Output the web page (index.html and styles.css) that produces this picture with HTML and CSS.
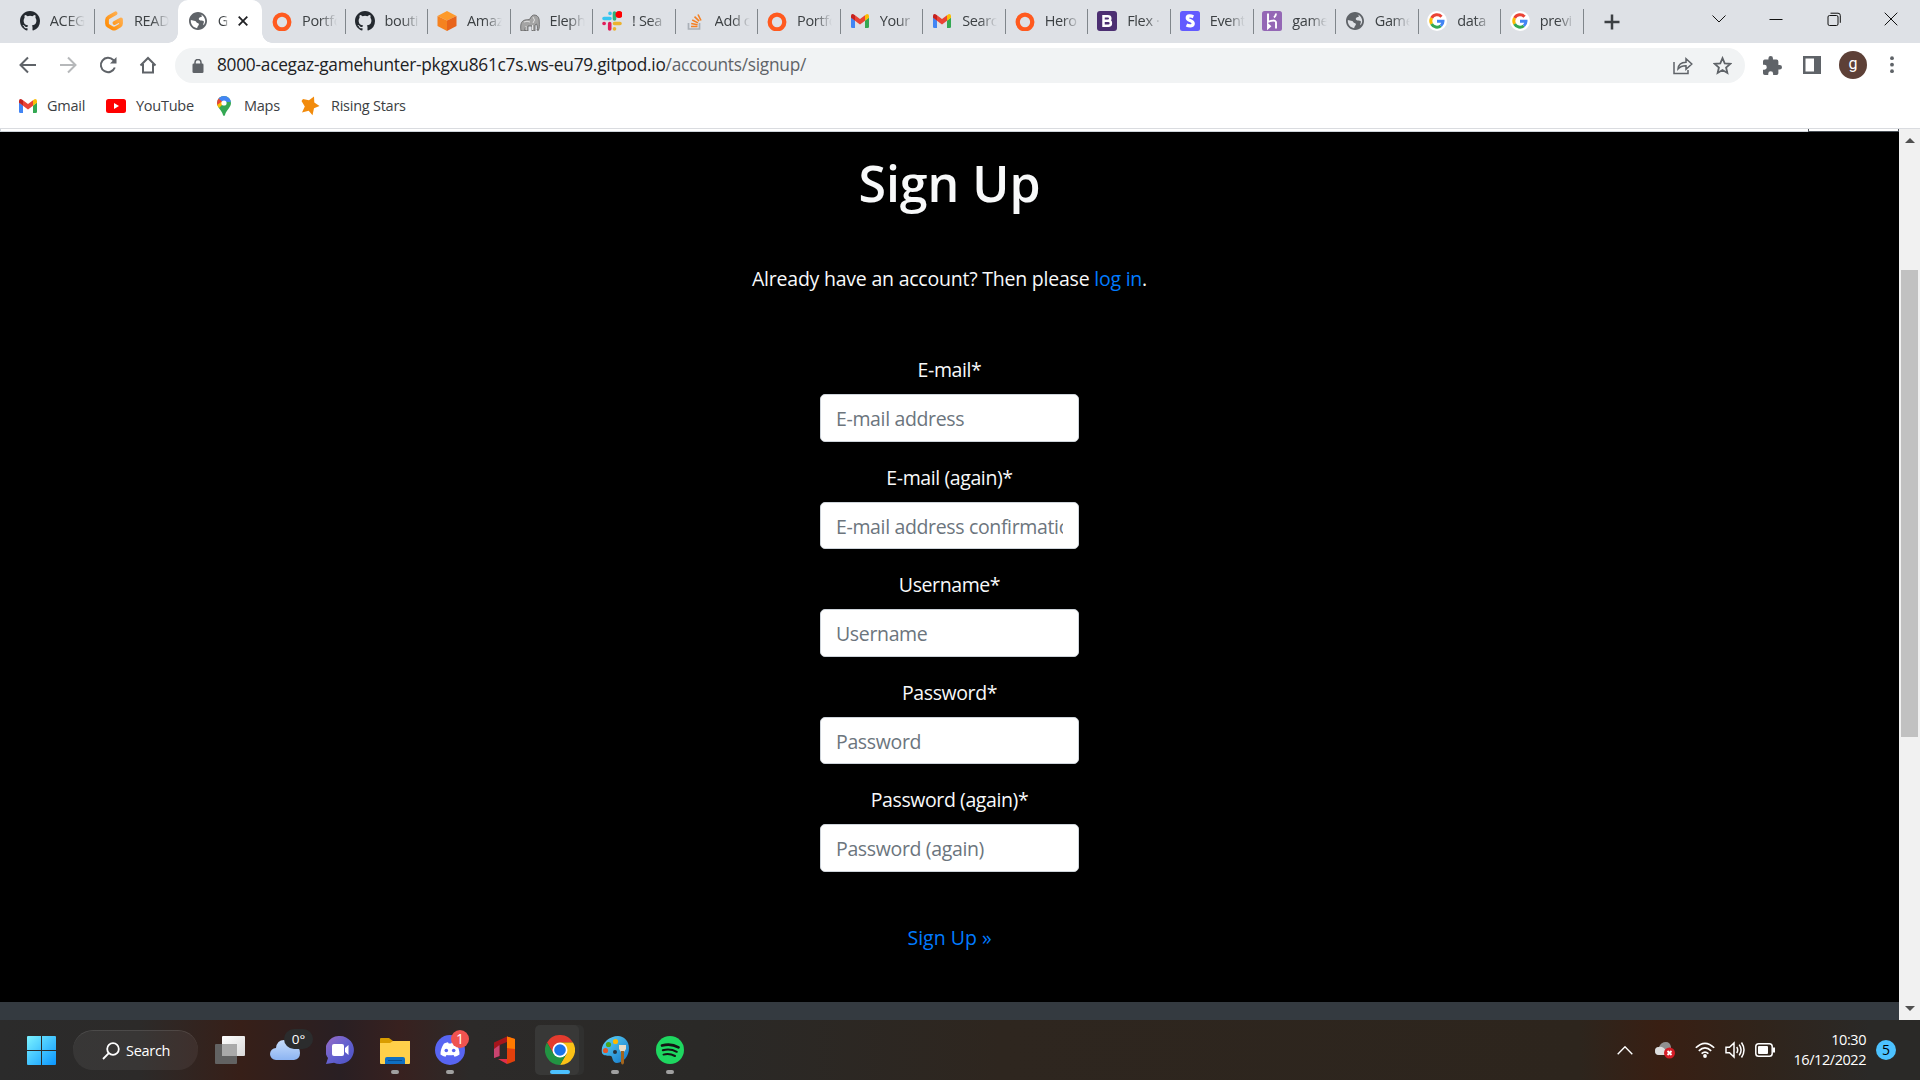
FILE: index.html
```
<!DOCTYPE html>
<html lang="en">
<head>
<meta charset="utf-8">
<title>Sign Up</title>
<link rel="stylesheet" href="styles.css">
</head>
<body>
<svg class="defs" width="0" height="0">
  <defs>
    <symbol id="github" viewBox="0 0 16 16"><path fill="#24292f" d="M8 0C3.58 0 0 3.58 0 8c0 3.54 2.29 6.53 5.47 7.59.4.07.55-.17.55-.38 0-.19-.01-.82-.01-1.49-2.01.37-2.53-.49-2.69-.94-.09-.23-.48-.94-.82-1.13-.28-.15-.68-.52-.01-.53.63-.01 1.08.58 1.23.82.72 1.21 1.87.87 2.33.66.07-.52.28-.87.51-1.07-1.78-.2-3.64-.89-3.64-3.95 0-.87.31-1.59.82-2.15-.08-.2-.36-1.02.08-2.12 0 0 .67-.21 2.2.82a7.4 7.4 0 0 1 4 0c1.53-1.04 2.2-.82 2.2-.82.44 1.1.16 1.92.08 2.12.51.56.82 1.27.82 2.15 0 3.07-1.87 3.75-3.65 3.95.29.25.54.73.54 1.48 0 1.07-.01 1.93-.01 2.2 0 .21.15.46.55.38A8.01 8.01 0 0 0 16 8c0-4.42-3.58-8-8-8z"/></symbol>
    <symbol id="gitpod" viewBox="0 0 20 20"><defs><linearGradient id="gp" x1="1" y1="0" x2="0" y2="1"><stop stop-color="#ffb45b"/><stop offset="1" stop-color="#ff8a00"/></linearGradient></defs><path fill="none" stroke="url(#gp)" stroke-width="3.8" stroke-linejoin="round" stroke-linecap="round" d="M11.5 2.300 4.800 6.200Q3 7.200 3 9V12.500Q3 14.100 4.400 14.900L8.600 17.300Q10 18 11.400 17.300L15.600 14.900Q17 14.100 17 12.500V8.500L10.500 12"/></symbol>
    <symbol id="globe" viewBox="2 2 20 20"><path fill="#5f6368" d="M12 2C6.480 2 2 6.480 2 12s4.480 10 10 10 10-4.480 10-10S17.520 2 12 2zm-1 17.930c-3.950-.490-7-3.850-7-7.930 0-.380.030-.750.080-1.100L8.800 12.100c1.100.3 1.200 1.400 2 1.800.9.500 2 .3 2.200 1.600.1 1.300-1.500 1.500-2 4.430zM18 16.800c-.8-1.600 1.500-3.400.2-4.700-1.200-1.200-3.200-.3-4.700-1.300-1.200-.8-.6-2.600.8-2.900 1.300-.3 2.500-.2 2-1.600-.2-.6-1-.9-1.300-1.600C18 5.900 20 8.700 20 12c0 1.800-.8 3.500-2 4.800z"/></symbol>
    <symbol id="ring" viewBox="0 0 20 20"><circle cx="10" cy="11" r="7.300" fill="none" stroke="#ff5a1f" stroke-width="4.300"/></symbol>
    <symbol id="cube" viewBox="0 0 20 20"><path fill="#fd9a2b" d="m10 0 9.500 5L10 9.500.5 5z"/><path fill="#f58220" d="m.5 5 9.500 4.500V20L.5 15z"/><path fill="#e8641b" d="M19.500 5 10 9.500V20l9.500-5z"/></symbol>
    <symbol id="elephant" viewBox="0 -3 20 20"><path fill="#a4a4a4" stroke="#555" stroke-width=".7" d="M1 17c-1-6 0-10 4-11 2-.6 4 0 5-1 1-3 3-4.400 5-4 3 .5 4.500 3 4.300 7 0 3 .5 6-1 8.500l-1.300-.5c1-2 .3-4-.5-6l-1.500 1v6h-3v-5H8v5H5.500v-4l-1 4z"/><path fill="none" stroke="#e2e2e2" d="M4 8q3-1.500 6 0M13 3q3 3 0 6M6 12v4M12.500 11v5"/></symbol>
    <symbol id="slack" viewBox="0 0 20 20"><g stroke-width="3.600" stroke-linecap="round"><path stroke="#36c5f0" d="M2 7.500h6M8 2.200v.2"/><path stroke="#2eb67d" d="M12.500 2v6"/><path stroke="#ecb22e" d="M12.500 12.500H18M12.500 17.700v.2"/><path stroke="#e01e5a" d="M7.700 12.500V18M2 12.500h.2"/></g><circle cx="17" cy="3.500" r="3.500" fill="#f00"/></symbol>
    <symbol id="stack" viewBox="0 0 20 20"><path fill="none" stroke="#aab0b7" stroke-width="1.700" d="M3.500 12v6h11v-6"/><path fill="none" stroke="#f48024" stroke-width="1.600" d="M6 15.500h6.500M6.200 12.500l6.400 1.300M7.200 9l5.800 2.900M9.500 5.700l4.700 4.500M13 3.500l3 6"/></symbol>
    <symbol id="gmail" viewBox="0 0 18 14"><path fill="#4285f4" d="M0 3.500 4 6.600V14H1.300Q0 14 0 12.700z"/><path fill="#34a853" d="M14 6.600 18 3.500v9.200q0 1.300-1.300 1.300H14z"/><path fill="#fbbc04" d="M14 1.300v5.500l4-3V2q0-2-2-2z"/><path fill="#c5221f" d="M0 2v1.800l4 3V1.300L2.500.2Q0-.5 0 2z"/><path fill="#ea4335" d="M4 1.300v5.500l5 3.700 5-3.700V1.300L9 5z"/></symbol>
    <symbol id="bootstrap" viewBox="0 0 20 20"><rect width="20" height="20" rx="3" fill="#4c2f72"/><path fill="none" stroke="#fff" stroke-width="2.500" d="M6.500 5.300h4.300q2.500 0 2.500 2.200T10.800 9.800H6.500h4.800q2.600 0 2.600 2.500t-2.600 2.500H6.500z"/></symbol>
    <symbol id="stripe" viewBox="0 0 20 20"><rect width="20" height="20" rx="2.500" fill="#635bff"/><path fill="none" stroke="#fff" stroke-width="3.300" d="M13.400 5.700C11 4.800 7.300 4.300 7.300 6.900c0 3 5.900 2.300 5.900 5.600 0 3-4.300 2.600-6.700 1.500"/></symbol>
    <symbol id="heroku" viewBox="0 0 20 20"><rect width="20" height="20" rx="2.500" fill="#9467b5"/><path fill="none" stroke="#fff" stroke-width="1.900" d="M6 2.500v8.300c3-1.300 8-2.200 8 .7v6M14 2.500q0 2.300-2 4M6 13.500v3.600l2-1.800z"/></symbol>
    <symbol id="google" viewBox="0 0 20 20"><circle cx="10" cy="10" r="10" fill="#fff"/><g fill="none" stroke-width="3"><path stroke="#ea4335" d="M14.500 5.700A6.100 6.100 0 0 0 4.600 7"/><path stroke="#fbbc05" d="M4.600 7a6.100 6.100 0 0 0 0 6"/><path stroke="#34a853" d="M4.600 13a6.100 6.100 0 0 0 9.200 1.800"/><path stroke="#4285f4" d="M13.800 14.800Q16 13 16 10.200H10"/></g></symbol>
  </defs>
</svg>

<header class="browser">
  <div class="tabstrip">
    <div class="tab first"><svg class="fav"><use href="#github"/></svg><span class="tab-title">ACEG</span></div>
    <div class="tab no-sep"><svg class="fav"><use href="#gitpod"/></svg><span class="tab-title">READ</span></div>
    <div class="tab active"><svg class="fav small"><use href="#globe"/></svg><span class="tab-title short">G</span><svg class="close" viewBox="0 0 10 10"><path d="m.7.700 8.600 8.600M9.300.7.700 9.300"/></svg></div>
    <div class="tab"><svg class="fav"><use href="#ring"/></svg><span class="tab-title">Portfo</span></div>
    <div class="tab"><svg class="fav"><use href="#github"/></svg><span class="tab-title">bouti</span></div>
    <div class="tab"><svg class="fav"><use href="#cube"/></svg><span class="tab-title">Amaz</span></div>
    <div class="tab"><svg class="fav"><use href="#elephant"/></svg><span class="tab-title">Eleph</span></div>
    <div class="tab"><svg class="fav"><use href="#slack"/></svg><span class="tab-title">! Sea</span></div>
    <div class="tab"><svg class="fav"><use href="#stack"/></svg><span class="tab-title">Add c</span></div>
    <div class="tab"><svg class="fav"><use href="#ring"/></svg><span class="tab-title">Portfo</span></div>
    <div class="tab"><svg class="fav small"><use href="#gmail"/></svg><span class="tab-title">Your</span></div>
    <div class="tab"><svg class="fav small"><use href="#gmail"/></svg><span class="tab-title">Searc</span></div>
    <div class="tab"><svg class="fav"><use href="#ring"/></svg><span class="tab-title">Hero</span></div>
    <div class="tab"><svg class="fav"><use href="#bootstrap"/></svg><span class="tab-title">Flex ·</span></div>
    <div class="tab"><svg class="fav"><use href="#stripe"/></svg><span class="tab-title">Event</span></div>
    <div class="tab"><svg class="fav"><use href="#heroku"/></svg><span class="tab-title">game</span></div>
    <div class="tab"><svg class="fav small"><use href="#globe"/></svg><span class="tab-title">Game</span></div>
    <div class="tab"><svg class="fav"><use href="#google"/></svg><span class="tab-title">data</span></div>
    <div class="tab"><svg class="fav"><use href="#google"/></svg><span class="tab-title">previ</span></div>
    <svg class="newtab" viewBox="0 0 16 16"><path d="M8 .5v15M.5 8h15"/></svg>
    <div class="winctl">
      <svg viewBox="0 0 14 14"><path d="m.5 3.500 6.500 6.500 6.500-6.500"/></svg>
      <svg viewBox="0 0 14 14"><path d="M.5 7.500h13"/></svg>
      <svg viewBox="0 0 14 14"><rect x="1" y="3.500" width="10" height="10" rx="1.500"/><path d="M3.500 1.200h7.500q2.300 0 2.300 2.300v7.300"/></svg>
      <svg viewBox="0 0 14 14"><path d="m.7.700 12.600 12.600M13.300.7.700 13.300"/></svg>
    </div>
  </div>
  <div class="toolbar">
    <div class="nav">
      <svg viewBox="0 0 18 18"><path d="M17 9H2M9 1.500 1.500 9 9 16.500"/></svg>
      <svg class="off" viewBox="0 0 18 18"><path d="M1 9h15M9 1.500 16.500 9 9 16.500"/></svg>
      <svg viewBox="0 0 18 18"><path d="M15.800 11.500A7.200 7.200 0 1 1 14.300 4l1.200 1.500"/><path class="solid" d="M17.500 1v6.500H11z"/></svg>
      <svg viewBox="0 0 18 18"><path d="M1.500 9.500 9 2l7.500 7.500M4 8v8.500h10V8"/></svg>
    </div>
    <div class="omnibox">
      <svg class="lock" viewBox="0 0 12 14"><rect x=".5" y="4.500" width="11" height="9.500" rx="1.300"/><path d="M3 5V3.500a3 3 0 0 1 6 0V5"/></svg>
      <span class="url">8000-acegaz-gamehunter-pkgxu861c7s.ws-eu79.gitpod.io<span class="path">/accounts/signup/</span></span>
      <svg class="share" viewBox="0 0 20 18"><path d="M1 5v11.500h14V13M5 12q.5-6.500 8-6.700V1.700L18.800 7 13 12.200V8.800Q8 8.700 5 12z"/></svg>
      <svg class="star" viewBox="0 0 18 18"><path d="m9 2 2.100 4.900 5.300.5-4 3.500 1.200 5.200L9 13.300l-4.600 2.800 1.200-5.200-4-3.500 5.300-.5z"/></svg>
    </div>
    <svg class="puzzle" viewBox="2 1 21 21"><path d="M20.500 11H19V7a2 2 0 0 0-2-2h-4V3.500a2.500 2.500 0 0 0-5 0V5H4a2 2 0 0 0-2 2v3.800h1.500a2.700 2.700 0 0 1 0 5.400H2V20a2 2 0 0 0 2 2h3.800v-1.500a2.700 2.700 0 0 1 5.400 0V22H17a2 2 0 0 0 2-2v-4h1.500a2.500 2.500 0 0 0 0-5z"/></svg>
    <svg class="panel" viewBox="0 0 18 18"><path fill-rule="evenodd" d="M0 0h18v18H0zM2.500 2.500v13H11v-13z"/></svg>
    <div class="avatar">g</div>
    <svg class="menu" viewBox="0 0 4 18"><circle cx="2" cy="2.200" r="1.900"/><circle cx="2" cy="8.700" r="1.900"/><circle cx="2" cy="15.200" r="1.900"/></svg>
  </div>
  <nav class="bookmarks">
    <a class="bm bm-gmail"><svg width="18" height="14"><use href="#gmail"/></svg>Gmail</a>
    <a class="bm bm-yt"><svg width="20" height="14" viewBox="0 0 20 14"><rect width="20" height="14" rx="2.500" fill="red"/><path fill="#fff" d="M8 4v6l5-3z"/></svg>YouTube</a>
    <a class="bm bm-maps"><svg width="14" height="20" viewBox="0 0 14 20"><defs><clipPath id="pin"><path d="M7 0a7 7 0 0 1 7 7c0 4.500-4.500 6.500-6 12q-1 2-2 0C4.500 13.500 0 11.500 0 7a7 7 0 0 1 7-7z"/></clipPath></defs><g clip-path="url(#pin)"><path fill="#34a853" d="M0 0h14v20H0z"/><path fill="#fbbc04" d="M0 14 12 2l-4-1L-2 9z"/><path fill="#ea4335" d="M0 9 7 4 2 0-2 4z"/><path fill="#4285f4" d="m1.500 2.500 4 3.300L14 6V0H1z"/></g><circle cx="7" cy="7" r="2.600" fill="#fff"/></svg>Maps</a>
    <a class="bm bm-stars"><svg width="19" height="20" viewBox="0 0 19 20"><path fill="#f28b0c" d="m2 3 6 1.200L13 .5l.3 6L18.500 10l-5.500 2.300-1.500 7-3.800-4.500L1 16.500l2.800-6L.5 5z"/></svg>Rising Stars</a>
  </nav>
</header>

<main class="viewport">
  <div class="page">
    <div class="navbar-end"><div class="navbar-box"></div></div>
    <section class="signup">
      <h1>Sign Up</h1>
      <p class="lead">Already have an account? Then please <a>log in</a>.</p>
      <form class="form">
        <div class="group"><label>E-mail*</label><input type="text" placeholder="E-mail address"></div>
        <div class="group"><label>E-mail (again)*</label><input type="text" placeholder="E-mail address confirmation"></div>
        <div class="group"><label>Username*</label><input type="text" placeholder="Username"></div>
        <div class="group"><label>Password*</label><input type="password" placeholder="Password"></div>
        <div class="group"><label>Password (again)*</label><input type="password" placeholder="Password (again)"></div>
        <a class="submit">Sign Up »</a>
      </form>
    </section>
    <footer class="footer"></footer>
  </div>
  <div class="scrollbar"><i class="up"></i><div class="thumb"></div><i class="down"></i></div>
</main>

<footer class="taskbar">
  <div class="apps">
    <div class="app start"><svg width="29" height="29" viewBox="0 0 29 29"><defs><linearGradient id="win" x1="0" y1="0" x2="29" y2="29" gradientUnits="userSpaceOnUse"><stop stop-color="#7cf3ff"/><stop offset="1" stop-color="#0a96ff"/></linearGradient></defs><path fill="url(#win)" d="M0 1q0-1 1-1h13v14H0zM15 0h13q1 0 1 1v13H15zM0 15h14v14H1q-1 0-1-1zM15 15h14v13q0 1-1 1H15z"/></svg></div>
    <div class="search"><svg width="18" height="18" viewBox="0 0 18 18"><circle cx="11" cy="7" r="5.800"/><path d="M6.800 11.200 1 17"/></svg>Search</div>
    <div class="app taskview"><svg width="30" height="28" viewBox="0 0 30 28"><defs><linearGradient id="tv" x1="0" y1="0" x2="1" y2="1"><stop stop-color="#fff"/><stop offset="1" stop-color="#d8d8d8"/></linearGradient></defs><rect y="8" width="22" height="20" rx="1" fill="#626262"/><rect x="7" width="23" height="20" rx="1" fill="url(#tv)"/><path fill="#a9a9a9" d="M7 8h15v12H7z"/></svg></div>
    <div class="app weather"><svg width="30" height="20" viewBox="0 0 30 20"><defs><linearGradient id="cl" x1="0" y1="0" x2="0" y2="1"><stop stop-color="#c7ddfb"/><stop offset="1" stop-color="#8cb4f2"/></linearGradient></defs><path fill="url(#cl)" d="M6 20a6 6 0 0 1 0-12Q7 0 14 0q6 0 8 6 8-1 8 7 0 6-6 7z"/></svg><span class="temp">0°</span></div>
    <div class="app chat"><svg width="28" height="28" viewBox="0 0 28 28"><defs><linearGradient id="ch" x1="0" y1="0" x2="1" y2="1"><stop stop-color="#9a6bc4"/><stop offset=".5" stop-color="#6461cf"/><stop offset="1" stop-color="#4a51c4"/></linearGradient></defs><path fill="url(#ch)" d="M14 0a14 14 0 1 1-6 26.700L0 28l2-6A14 14 0 0 1 14 0z"/><rect x="6" y="8" width="12" height="12" rx="2" fill="#fff"/><path fill="#fff" d="m19 12 3.500-3v10L19 16z"/></svg></div>
    <div class="app run"><svg width="30" height="27" viewBox="0 0 30 27"><path fill="#d99c00" d="M0 2q0-1 1-1h8l4 3v4H0z"/><path fill="#ffd04a" d="M0 6h10l3-2h17v22q0 1-1 1H1q-1 0-1-1z"/><path fill="#0f6fc2" d="M5 27v-5q0-2 2-2h16q2 0 2 2v5z"/><path stroke="#084c8d" d="M8 23.500h14"/></svg></div>
    <div class="app run"><svg width="30" height="30" viewBox="0 0 30 30"><circle cx="15" cy="15" r="15" fill="#5865f2"/><path fill="#fff" d="M9 8.500q2-1 4-1.200l.7 1.200h2.600l.7-1.200q2 .2 4 1.200 3.500 5 3.500 11-2.500 1.800-5 2.200l-1-1.800q-3.500.8-7 0l-1 1.800q-2.500-.4-5-2.200 0-6 3.500-11z"/><circle cx="11.300" cy="15.500" r="1.800" fill="#5865f2"/><circle cx="18.700" cy="15.500" r="1.800" fill="#5865f2"/></svg><span class="badge">1</span></div>
    <div class="app"><svg width="24" height="28" viewBox="0 0 24 28"><path fill="#a5151b" d="m1 6.500 13-6V6L6.500 9v11L1 22z"/><path fill="#c94470" d="M1 13v9l5.500-2V9z"/><path fill="#e2400c" d="m14 .5 8 2.500v22l-8 3z"/><path fill="#ff7a00" d="m14 .5 8 2.500v10l-8-1z"/><path fill="#e02f4a" d="M5 23h9v5z"/></svg></div>
    <div class="app chrome"><svg width="30" height="30" viewBox="0 0 30 30"><path fill="#e33b2e" d="M2 7.500a15 15 0 0 1 26 0H15L8.500 18.700z"/><path fill="#fbc116" d="M28 7.500A15 15 0 0 1 15 30l6.500-11.200L15 7.500z"/><path fill="#229342" d="M15 30A15 15 0 0 1 2 7.500l6.500 11.200h13z"/><circle cx="15" cy="15" r="7.500" fill="#fff"/><circle cx="15" cy="15" r="5.800" fill="#1a73e8"/></svg></div>
    <div class="app run"><svg width="28" height="30" viewBox="0 0 28 30"><defs><linearGradient id="pa" x1="0" y1="0" x2="1" y2="1"><stop stop-color="#5fd6f7"/><stop offset="1" stop-color="#1275c9"/></linearGradient></defs><path fill="url(#pa)" d="M17 1c6 0 11 5 11 12 0 8-5 14-12 15-5 0-4-6-6-7s-7 1-9-3C-1 9 8 1 17 1z"/><circle cx="14" cy="17" r="2" fill="#26323a"/><circle cx="4.500" cy="15.500" r="2.600" fill="#e2572b"/><circle cx="7.500" cy="9.500" r="2.600" fill="#4aa51c"/><circle cx="14.500" cy="6.500" r="2.600" fill="#ffb900"/><path fill="#e8ddc8" d="M18 10h7v4l-2 3h-3l-2-3z"/><path fill="#a3651d" d="M20 16h3v12q-1.500 3-3 0z"/></svg></div>
    <div class="app run"><svg width="28" height="28" viewBox="0 0 28 28"><circle cx="14" cy="14" r="14" fill="#1ed760"/><path fill="none" stroke="#141414" stroke-linecap="round" d="M6 9.500q9-2.500 16.500 1.800" stroke-width="2.700"/><path fill="none" stroke="#141414" stroke-linecap="round" d="M6.800 14.200q7.500-2 14 1.600M7.500 18.600q6-1.500 11.500 1.400" stroke-width="2"/></svg></div>
  </div>
  <div class="tray">
    <svg class="chevron" width="16" height="9" viewBox="0 0 16 9"><path d="m.7 8.300 7.300-7.500 7.300 7.500"/></svg>
    <svg class="cloud" width="20" height="17" viewBox="0 0 20 17"><path fill="#8f8f8f" stroke="none" d="M4 13a4 4 0 0 1 0-8q2-5 7-5 4 0 5 5v8z"/><path fill="#ddd" stroke="none" d="M4 13a4 4 0 0 1 0-8q4-1 7 4v4z"/><circle cx="14.500" cy="11" r="5.500" fill="#d41c26" stroke="none"/><path stroke-width="1.800" d="m12.500 9 4 4m0-4-4 4"/></svg>
    <svg width="20" height="16" viewBox="0 0 20 16"><path stroke-width="1.600" d="M.8 5.800q9.200-9 18.400 0M3.800 8.900q6.200-6 12.400 0M6.600 11.700q3.400-3.200 6.800 0"/><circle cx="10" cy="14" r="1.900" fill="#fff" stroke="none"/></svg>
    <svg width="20" height="18" viewBox="0 0 20 18"><path stroke-width="1.500" d="M1 6.200h3.500L9 2v14l-4.500-4.200H1zM11.700 6q2 3 0 6M14.200 3.600q3.800 5.400 0 10.800M16.500 1.500q5 7.500 0 15"/></svg>
    <svg width="20" height="14" viewBox="0 0 20 14"><rect x=".8" y=".8" width="16.400" height="12.400" rx="2.800" stroke-width="1.500"/><rect x="3" y="3" width="10" height="8" rx="1" fill="#fff" stroke="none"/><path stroke-width="2" d="M19 4.500v5"/></svg>
    <div class="clock"><span>10:30</span><span>16/12/2022</span></div>
    <div class="count">5</div>
  </div>
</footer>
</body>
</html>
```
FILE: styles.css
```
* { box-sizing: border-box; }
body { margin: 0; width: 1920px; height: 1080px; overflow: hidden; display: flex; flex-direction: column; font-family: "Open Sans", "Noto Sans", sans-serif; background: #fff; }
svg { display: block; flex: none; }
.defs { position: absolute; }

/* Browser chrome */
.browser { height: 129px; flex: none; background: #fff; border-bottom: 1px solid #dadce0; }
.tabstrip { height: 43px; background: #dee1e6; display: flex; align-items: center; padding-left: 12.800px; }
.tab { width: 82.530px; height: 43px; flex: none; display: flex; align-items: center; padding: 0 0 2px 8.700px; position: relative; }
.tab.first { padding-left: 7px; }
.tab::after { content: ""; position: absolute; right: 0; top: 9px; width: 1px; height: 25px; background: #80868b; }
.tab.no-sep::after { display: none; }
.fav { width: 20px; height: 20px; }
.fav.small { width: 18px; height: 18px; margin: 0 1px; }
.tab-title { width: 35px; margin-left: 10px; overflow: hidden; white-space: nowrap; font-size: 14.500px; letter-spacing: -.35px; line-height: 24px; color: #3c4043; -webkit-mask-image: linear-gradient(90deg, #000 50%, transparent); mask-image: linear-gradient(90deg, #000 50%, transparent); }
.tab.active { background: #fff; border-radius: 10px 10px 0 0; width: 84px; margin-right: 1.500px; padding-left: 10px; }
.tab.active::after { left: -10px; right: -10px; top: 33px; width: auto; height: 10px; background: radial-gradient(circle at 0 0, transparent 9.500px, #fff 10px) 0 0 / 10px 10px no-repeat, radial-gradient(circle at 100% 0, transparent 9.500px, #fff 10px) 100% 0 / 10px 10px no-repeat; z-index: 1; }
.tab-title.short { width: 11px; }
.close { width: 10px; height: 10px; margin-left: 9px; fill: none; stroke: #202124; stroke-width: 1.800; }
.newtab { width: 16px; height: 16px; margin-left: 20px; fill: none; stroke: #3c4043; stroke-width: 2.500; }
.winctl { margin-left: auto; display: flex; gap: 43.500px; padding: 0 22px 6px 0; }
.winctl svg { width: 14px; height: 14px; fill: none; stroke: #111; stroke-width: 1; }
.toolbar { height: 44px; display: flex; align-items: center; padding: 0 25px 0 19px; }
.nav { display: flex; gap: 22px; width: 156px; }
.nav svg { width: 18px; height: 18px; fill: none; stroke: #5f6368; stroke-width: 2; }
.nav .off { opacity: .45; }
.nav .solid { fill: #5f6368; stroke: none; }
.omnibox { width: 1570px; height: 35px; border-radius: 18px; background: #f1f3f4; display: flex; align-items: center; padding: 0 13px 0 17px; margin-top: 1px; }
.lock { width: 12px; height: 14px; fill: #5f6368; }
.lock path { fill: none; stroke: #5f6368; stroke-width: 1.500; }
.url { margin-left: 13px; font-size: 17.300px; letter-spacing: -.26px; line-height: 24px; padding-bottom: 1px; color: #202124; white-space: nowrap; }
.path { color: #5f6368; }
.share { width: 20px; height: 18px; margin-left: auto; margin-right: 20px; fill: none; stroke: #5f6368; stroke-width: 1.500; }
.star { width: 19px; height: 19px; fill: none; stroke: #5f6368; stroke-width: 1.700; }
.puzzle { width: 19px; height: 19px; margin-left: 18px; fill: #5f6368; }
.panel { width: 18px; height: 18px; margin-left: 21px; fill: #5f6368; }
.avatar { width: 28px; height: 28px; margin-left: 18px; border-radius: 50%; background: #5d4037; color: #fff; font: 16px/26px Roboto, sans-serif; text-align: center; }
.menu { width: 4px; height: 18px; margin-left: 23px; fill: #5f6368; }
.bookmarks { display: flex; height: 41px; align-items: center; padding: 0 0 4px 19px; font-size: 14.500px; letter-spacing: -.25px; color: #3c4043; }
.bm { display: flex; align-items: center; gap: 10px; white-space: nowrap; }
.bm-gmail { width: 87px; }
.bm-yt { width: 111px; }
.bm-maps { width: 84px; gap: 13px; }
.bm-stars { gap: 11px; }

/* Page */
.viewport { height: 891px; flex: none; display: flex; }
.page { width: 1899px; background: #000; display: flex; flex-direction: column; }
.navbar-end { height: 3px; flex: none; background: #fff; border-left: 1px solid #ced4da; border-bottom: 1px solid #ced4da; display: flex; justify-content: flex-end; }
.navbar-box { width: 91px; height: 3px; border: 1px solid #495057; border-top: 0; }
.signup { flex: 1; display: flex; flex-direction: column; align-items: center; color: #f8f9fa; font-size: 19.500px; }
h1 { margin: 21px 0 0; font-size: 50px; line-height: 60px; font-weight: 600; }
.lead { margin: 51px 0 0; line-height: 30px; letter-spacing: -.22px; }
.signup a { color: #007bff; }
.form { width: 259px; margin-top: 60px; display: flex; flex-direction: column; gap: 20px; }
.group { height: 87.500px; text-align: center; display: flex; flex-direction: column; gap: 10px; }
label { height: 30px; line-height: 31px; letter-spacing: -.4px; }
input { height: 47.500px; width: 100%; padding: 8.500px 15px 6.500px; border: 1px solid #ced4da; border-radius: 5px; background: #fff; font: 19.500px/30px "Open Sans", "Noto Sans", sans-serif; letter-spacing: -.35px; }
input::placeholder { color: #6c757d; opacity: 1; }
.submit { margin-top: 30px; line-height: 31px; text-align: center; }
.footer { height: 18px; background: #343a40; }
.scrollbar { width: 21px; background: #f1f1f1; display: flex; flex-direction: column; align-items: center; padding: 9px 0; }
.up, .down { border: 5px solid transparent; }
.up { border-top: 0; border-bottom-color: #505050; }
.down { border-bottom: 0; border-top-color: #505050; margin-top: auto; }
.thumb { width: 17px; height: 467px; margin-top: 127px; background: #c1c1c1; }

/* Taskbar */
.taskbar { height: 60px; flex: none; display: flex; justify-content: space-between; color: #fff; background: linear-gradient(90deg, #2b2b2b 0, #2c2a29 140px, #371f18 240px, #291f23 340px, #38211f 400px, #2c2a29 470px, #2a2927 700px, #2e261f 1000px, #2d251d 1580px, #391f13 1660px, #30241b 1760px, #2a2927 1870px); }
.apps { display: flex; align-items: center; padding-left: 14px; }
.app { width: 55px; height: 60px; display: flex; align-items: center; justify-content: center; position: relative; }
.run::after, .chrome::after { content: ""; position: absolute; left: 24px; top: 50px; width: 8px; height: 4px; border-radius: 2px; background: #a0a0a0; }
.chrome::after { left: 18px; width: 20px; background: #4cc2ff; }
.search { width: 125px; height: 40px; margin: 0 4px 0 4px; border-radius: 20px; background: rgba(255,255,255,.06); border-top: 1px solid rgba(255,255,255,.1); display: flex; align-items: center; gap: 6px; padding-left: 29px; font-size: 14.500px; letter-spacing: -.3px; }
.search svg { fill: none; stroke: #fff; stroke-width: 1.800; }
.temp { position: absolute; left: 27px; top: 9px; width: 29px; height: 20px; border-radius: 10px; background: #2b2c2d; font-size: 13.500px; line-height: 20px; text-align: center; }
.badge { position: absolute; left: 29px; top: 10px; width: 18px; height: 18px; border-radius: 50%; background: #ef5350; font-size: 14px; line-height: 18px; text-align: center; }
.chrome svg { position: relative; }
.chrome::before { content: ""; position: absolute; left: 3px; top: 5px; width: 44px; height: 50px; border-radius: 5px; background: #383837; box-shadow: 5px 0 0 #30302f; }
.tray { display: flex; align-items: center; padding-right: 24px; }
.tray svg { fill: none; stroke: #fff; stroke-width: 1.400; margin-right: 10px; }
.tray .chevron { margin-right: 22px; }
.tray .cloud { margin-right: 20px; }
.clock { width: 81px; display: flex; flex-direction: column; text-align: right; font-size: 14.500px; line-height: 20px; letter-spacing: -.45px; }
.count { width: 20px; height: 20px; margin-left: 10px; border-radius: 50%; background: #4cc2ff; color: #000; font-size: 14px; line-height: 20px; text-align: center; }
```
